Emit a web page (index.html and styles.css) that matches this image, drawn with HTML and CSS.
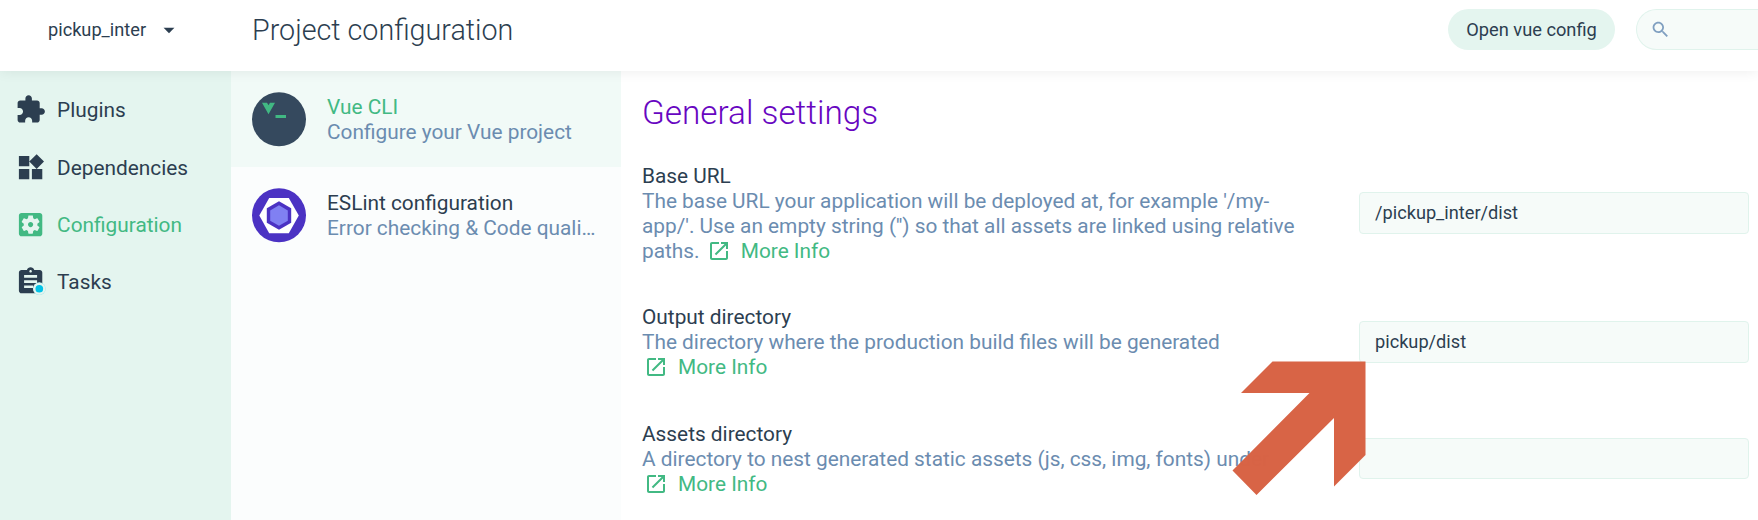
FILE: index.html
```html
<!DOCTYPE html>
<html lang="en">
<head>
<meta charset="utf-8">
<title>Project configuration</title>
<link rel="stylesheet" href="styles.css">
</head>
<body>
<svg class="defs" width="0" height="0">
  <symbol id="launch" viewBox="0 0 24 24"><path d="M19 19H5V5h7V3H5c-1.11 0-2 .9-2 2v14c0 1.1.89 2 2 2h14c1.1 0 2-.9 2-2v-7h-2v7zM14 3v2h3.59l-9.83 9.83 1.41 1.41L19 6.41V10h2V3h-7z"/></symbol>
</svg>
<header class="topbar">
  <div class="project">
    <span>pickup_inter</span>
    <svg class="caret" viewBox="0 0 24 24"><path d="M7 10l5 5 5-5z"/></svg>
  </div>
  <h1 class="title">Project configuration</h1>
  <div class="actions">
    <button class="open">Open vue config</button>
    <div class="search"><svg viewBox="0 0 24 24"><path d="M15.5 14h-.79l-.28-.27C15.41 12.59 16 11.11 16 9.5 16 5.91 13.09 3 9.5 3S3 5.91 3 9.5 5.91 16 9.5 16c1.61 0 3.09-.59 4.23-1.57l.27.28v.79l5 4.99L20.49 19l-4.99-5zm-6 0C7.01 14 5 11.99 5 9.5S7.01 5 9.5 5 14 7.01 14 9.5 11.99 14 9.5 14z"/></svg></div>
  </div>
</header>
<div class="main">
  <nav class="sidebar">
    <a class="nav"><svg viewBox="0 0 24 24"><path d="M20.5 11H19V7c0-1.1-.9-2-2-2h-4V3.500C13 2.120 11.880 1 10.500 1S8 2.120 8 3.500V5H4c-1.100 0-1.990.9-1.990 2v3.800H3.500c1.490 0 2.700 1.210 2.700 2.700s-1.210 2.700-2.700 2.700H2V20c0 1.100.9 2 2 2h3.800v-1.500c0-1.490 1.210-2.700 2.700-2.700 1.490 0 2.700 1.210 2.700 2.700V22H17c1.100 0 2-.9 2-2v-4h1.500c1.380 0 2.500-1.120 2.500-2.500S21.880 11 20.500 11z"/></svg><span>Plugins</span></a>
    <a class="nav"><svg viewBox="0 0 24 24"><path d="M13 13v8h8v-8h-8zM3 21h8v-8H3v8zM3 3v8h8V3H3zm13.660-1.310L11 7.340 16.660 13l5.660-5.660-5.660-5.650z"/></svg><span>Dependencies</span></a>
    <a class="nav current"><svg viewBox="0 0 24 24"><path d="M12 10c-1.100 0-2 .9-2 2s.9 2 2 2 2-.9 2-2-.9-2-2-2zm7-7H5c-1.110 0-2 .9-2 2v14c0 1.100.89 2 2 2h14c1.110 0 2-.9 2-2V5c0-1.100-.89-2-2-2zm-1.750 9c0 .23-.02.46-.05.68l1.480 1.160c.13.11.17.3.08.45l-1.400 2.420c-.09.15-.27.21-.43.15l-1.740-.7c-.36.28-.76.51-1.180.69l-.26 1.850c-.03.17-.18.3-.35.3h-2.800c-.17 0-.32-.13-.35-.29l-.26-1.850c-.43-.18-.82-.41-1.180-.69l-1.740.7c-.16.06-.34 0-.43-.15l-1.400-2.420c-.09-.15-.05-.34.08-.45l1.480-1.160c-.03-.23-.05-.46-.05-.69 0-.23.02-.46.05-.68l-1.480-1.160c-.13-.11-.17-.3-.08-.45l1.400-2.420c.09-.15.27-.21.43-.15l1.740.7c.36-.28.76-.51 1.180-.69l.26-1.850c.03-.17.18-.3.35-.3h2.800c.17 0 .32.13.35.29l.26 1.850c.43.18.82.41 1.180.69l1.740-.7c.16-.06.34 0 .43.15l1.400 2.420c.09.15.05.34-.08.45l-1.480 1.160c.03.23.05.46.05.69z"/></svg><span>Configuration</span></a>
    <a class="nav"><svg viewBox="0 0 24 24"><path d="M19 3h-4.180C14.400 1.840 13.300 1 12 1c-1.300 0-2.400.84-2.820 2H5c-1.100 0-2 .9-2 2v14c0 1.100.9 2 2 2h14c1.100 0 2-.9 2-2V5c0-1.100-.9-2-2-2zm-7 0c.55 0 1 .45 1 1s-.45 1-1 1-1-.45-1-1 .45-1 1-1zm2 14H7v-2h7v2zm3-4H7v-2h10v2zm0-4H7V7h10v2z"/><circle cx="18.700" cy="17.500" r="4.900" fill="#a5e5ea"/><circle cx="18.700" cy="17.500" r="3.800" fill="#03c2e6" stroke="#e4f5ef" stroke-width="1.700"/></svg><span>Tasks</span></a>
  </nav>
  <div class="modules">
    <div class="module selected">
      <svg viewBox="0 0 54 54"><circle cx="27" cy="27" r="27" fill="#35495e"/><path d="M10 10.500h5l1.500 2.500 1.500-2.500h5l-6.500 11.500z" fill="#41b883"/><path d="M23.500 22.700h10.500v3H23.500z" fill="#41b883"/></svg>
      <div class="info"><div class="name">Vue CLI</div><div class="desc">Configure your Vue project</div></div>
    </div>
    <div class="module">
      <svg viewBox="0 0 54 54"><circle cx="27" cy="27" r="27" fill="#4b32c3"/><path d="M17.200 9.700h19.600L46.800 27.300 36.800 45H17.200L7.300 27.300z" fill="#fff"/><path d="M27 13L39.200 20v14.500L27 41.500 14.800 34.500V20z" fill="#4b32c3"/><path d="M27 17l8.800 5.100v10.300L27 37.500l-8.800-5.100V22.100z" fill="#8080f2"/></svg>
      <div class="info"><div class="name">ESLint configuration</div><div class="desc">Error checking &amp; Code quality</div></div>
    </div>
  </div>
  <main class="content">
    <h2 class="heading">General settings</h2>
    <section class="row">
      <div class="text"><div class="name">Base URL</div><div class="desc">The base URL your application will be deployed at, for example '/my-app/'. Use an empty string ('') so that all assets are linked using relative paths. <a class="more"><svg><use href="#launch"/></svg>More Info</a></div></div>
      <div class="field">/pickup_inter/dist</div>
    </section>
    <section class="row">
      <div class="text"><div class="name">Output directory</div><div class="desc">The directory where the production build files will be generated <br><a class="more"><svg><use href="#launch"/></svg>More Info</a></div></div>
      <div class="field">pickup/dist</div>
    </section>
    <section class="row">
      <div class="text"><div class="name">Assets directory</div><div class="desc">A directory to nest generated static assets (js, css, img, fonts) under <br><a class="more"><svg><use href="#launch"/></svg>More Info</a></div></div>
      <div class="field"></div>
    </section>
  </main>
</div>
<svg class="arrow" viewBox="0 0 134 134"><path d="M40.500.5H133.500V94L102 125.500V57L24.500 134 .5 109.500 77.500 32H9z"/></svg>
</body>
</html>
```
FILE: styles.css
```css
* { box-sizing: border-box; }
body {
  margin: 0;
  width: 1758px;
  height: 520px;
  overflow: hidden;
  display: flex;
  flex-direction: column;
  position: relative;
  background: #fff;
  color: #2c3e50;
  font: 20.840px/25px Roboto, sans-serif;
}
svg { fill: currentColor; flex: none; }
.defs { position: absolute; }
.topbar {
  height: 71px;
  flex: none;
  display: flex;
  padding-top: 9px;
  background: #fff;
  box-shadow: 0 0 13px rgba(0, 0, 0, .08);
  position: relative;
  z-index: 1;
}
.project {
  width: 252px;
  height: 41px;
  padding-left: 48px;
  display: flex;
  align-items: center;
  gap: 10px;
  font-size: 18.2px;
}
.caret { width: 26px; height: 26px; }
.title { margin: 1px 0 0; font-size: 28.7px; font-weight: 300; line-height: 41px; }
.actions { margin-left: auto; display: flex; gap: 21px; }
.open {
  width: 167px;
  height: 41px;
  padding: 0;
  border: 0;
  border-radius: 21px;
  background: #e4f5ef;
  color: inherit;
  font: 18.25px Roboto, sans-serif;
}
.search {
  width: 122px;
  height: 41px;
  padding-left: 13px;
  display: flex;
  align-items: center;
  border: 1px solid #e0f3ec;
  border-right: 0;
  border-radius: 21px 0 0 21px;
  background: #f6fbf9;
  color: #7f9fc0;
}
.search svg { width: 21px; height: 21px; }
.main { flex: 1; display: flex; min-height: 0; }
.sidebar { width: 231px; padding-top: 10.400px; background: #e4f5ef; }
.nav { height: 57.200px; padding-left: 15px; display: flex; align-items: center; gap: 10.900px; }
.nav svg { width: 31.200px; height: 31.200px; }
.nav span { padding-top: 2px; }
.current { color: #42b983; }
.modules { width: 390px; background: #fbfdfd; }
.module { height: 96px; padding: 1px 24px 0 21px; display: flex; align-items: center; gap: 21px; }
.module svg { width: 54px; height: 54.600px; }
.selected { background: #f1faf7; }
.selected .name { color: #42b983; }
.info { min-width: 0; padding-top: 1px; }
.desc { color: #6b8cb0; }
.info .desc { white-space: nowrap; overflow: hidden; text-overflow: ellipsis; }
.content { width: 1128px; padding: 22px 0 0 21px; }
.heading { margin: 0 0 9px; color: #6806c1; font-size: 33.300px; font-weight: 300; line-height: 40px; }
.row { padding: 20.800px 0; display: flex; align-items: center; justify-content: space-between; }
.text { width: 660px; margin: 1px 0 -1px; }
.more { color: #42b983; margin-left: 2px; white-space: nowrap; }
.more svg { width: 24px; height: 24px; margin: -8px 10px 0 0; vertical-align: -5px; }
.field {
  width: 390px;
  height: 41.600px;
  padding-left: 15px;
  border: 1px solid #e0f3ec;
  border-radius: 4px;
  background: #f6fbf9;
  font-size: 18.200px;
  line-height: 40px;
}
.arrow { position: absolute; z-index: 2; left: 1232px; top: 361px; width: 134px; height: 134px; fill: #d86345; opacity: .993; }
```
